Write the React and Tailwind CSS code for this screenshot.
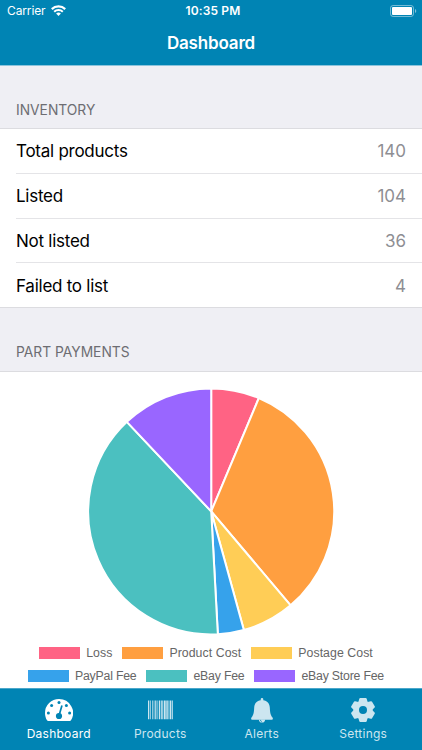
import React from 'react';

const inventory = [
  { label: 'Total products', value: 140 },
  { label: 'Listed', value: 104 },
  { label: 'Not listed', value: 36 },
  { label: 'Failed to list', value: 4 },
];

// start and end are degrees, clockwise from the top
const slices = [
  { label: 'Loss', color: '#ff6384', start: 0, end: 22.8 },
  { label: 'Product Cost', color: '#ff9f40', start: 22.8, end: 139.8 },
  { label: 'Postage Cost', color: '#ffcd56', start: 139.8, end: 164.6 },
  { label: 'PayPal Fee', color: '#36a2eb', start: 164.6, end: 176.9 },
  { label: 'eBay Fee', color: '#4bc0c0', start: 176.9, end: 316.7 },
  { label: 'eBay Store Fee', color: '#9966ff', start: 316.7, end: 360 },
];

const slicePath = ({ start, end }) => {
  const r = 123;
  const point = (deg) => {
    const a = (deg * Math.PI) / 180;
    return `${(r * Math.sin(a)).toFixed(2)} ${(-r * Math.cos(a)).toFixed(2)}`;
  };
  return `M0 0L${point(start)}A${r} ${r} 0 ${end - start > 180 ? 1 : 0} 1 ${point(end)}Z`;
};

function WifiIcon() {
  return (
    <svg className="ml-[5px] h-[11px] w-[15px]" viewBox="0 0 15 11" fill="none" stroke="white">
      <path d="M.8 4.100a9.500 9.500 0 0 1 13.400 0" strokeWidth="2.200" />
      <path d="M3.200 6.700a6.100 6.100 0 0 1 8.600 0" strokeWidth="2" />
      <path d="M7.500 11 5.100 8.600a3.400 3.400 0 0 1 4.800 0Z" fill="white" stroke="none" />
    </svg>
  );
}

function BatteryIcon() {
  return (
    <svg className="h-[12px] w-[27px]" viewBox="0 0 27 12">
      <rect x="0.5" y="0.5" width="23" height="11" rx="2.6" fill="none" stroke="white" strokeOpacity="0.45" />
      <rect x="2" y="2" width="20" height="8" rx="1" fill="white" />
      <path d="M25 4a2.2 2.2 0 0 1 0 4Z" fill="white" fillOpacity="0.5" />
    </svg>
  );
}

function GaugeIcon() {
  return (
    <svg className="h-[24px] w-[28px]" viewBox="0 0 28 24">
      <path d="M14 1A14 14 0 0 0 0 15c0 2.700.7 5.200 2 7.300.3.500.7.700 1.200.7h21.600c.5 0 .9-.2 1.200-.7A14 14 0 0 0 14 1Z" fill="white" />
      <g fill="#0084b4">
        <circle cx="3.400" cy="15" r="1.500" />
        <circle cx="6.600" cy="7.500" r="1.500" />
        <circle cx="14" cy="4.400" r="1.500" />
        <circle cx="21.400" cy="7.500" r="1.500" />
        <circle cx="24.600" cy="15" r="1.500" />
        <circle cx="14" cy="18" r="3.100" />
      </g>
      <path d="M14.200 17 16.800 8" stroke="#0084b4" strokeWidth="1.700" strokeLinecap="round" />
    </svg>
  );
}

function BarcodeIcon() {
  return (
    <svg className="h-[24px] w-[25px]" viewBox="0 0 25 24" fill="currentColor">
      <path d="M0 2.600h1.300v18.600H0zM2 2.600h.7v18.600H2zM4.200 2.600h.7v18.600h-.7zM5.700 2.600h.7v18.600h-.7zM7.200 2.600h1.200v18.600H7.200zM9.500 2.600h.7v18.600h-.7zM11 2.600h1.300v18.600H11zM13.200 2.600h1.500v18.600h-1.500zM15.700 2.600h2v18.600h-2zM18.300 2.600h1.500v18.600h-1.500zM20.500 2.600h.7v18.600h-.7zM21.800 2.600h1.200v18.600h-1.200zM23.600 2.600h1.200v18.600h-1.200z" />
    </svg>
  );
}

function BellIcon() {
  return (
    <svg className="h-[25px] w-[22px]" viewBox="0 0 22 25">
      <path
        d="M11 0c.8 0 1.300.6 1.300 1.400v.8c3.800.6 6.300 3.300 6.500 7.200.2 5.300.9 8 2.700 10 .7.900.4 2.400-.9 2.400H1.400C.1 21.800-.2 20.300.5 19.400c1.800-2 2.500-4.700 2.700-10 .2-3.900 2.700-6.600 6.500-7.200v-.8C9.700.6 10.200 0 11 0Z"
        fill="currentColor"
      />
      <path d="M7.900 21.500h6.200a3.100 3.100 0 0 1-6.200 0Z" fill="currentColor" />
      <path d="M9.200 21.800a1.900 1.900 0 0 0 1.800 1.700" stroke="#0084b4" strokeWidth=".7" fill="none" />
    </svg>
  );
}

function GearIcon() {
  return (
    <svg className="mr-px h-[24px] w-[24px]" viewBox="-12 -12 24 24">
      <g fill="currentColor">
        <circle r="9.600" />
        <path id="tooth" d="M-2.700-12h5.400q.8 0 1 .8L4.600-8h-9.200l.9-3.200q.2-.8 1-.8Z" />
        <use href="#tooth" transform="rotate(60)" />
        <use href="#tooth" transform="rotate(120)" />
        <use href="#tooth" transform="rotate(180)" />
        <use href="#tooth" transform="rotate(240)" />
        <use href="#tooth" transform="rotate(300)" />
      </g>
      <circle r="4" fill="#0084b4" />
    </svg>
  );
}

const tabs = [
  { label: 'Dashboard', icon: <GaugeIcon />, active: true },
  { label: 'Products', icon: <BarcodeIcon /> },
  { label: 'Alerts', icon: <BellIcon /> },
  { label: 'Settings', icon: <GearIcon /> },
];

function Legend({ items, className }) {
  return (
    <div className={`flex h-[22.5px] items-center justify-center gap-[10px] pr-[10px] ${className}`}>
      {items.map((item) => (
        <div key={item.label} className="flex items-center gap-[6px]">
          <span className="h-[12px] w-[41px]" style={{ backgroundColor: item.color }} />
          <span className="whitespace-nowrap font-['Liberation_Sans',sans-serif] text-[12.3px] leading-none text-[#666666]">
            {item.label}
          </span>
        </div>
      ))}
    </div>
  );
}

function App() {
  return (
    <div className="flex h-[750px] w-[422px] flex-col overflow-hidden bg-[#efeff4] font-['Inter',sans-serif]">
      <header className="h-[66px] shrink-0 border-b border-[#8cc4dc] bg-[#0084b4] text-white">
        <div className="grid h-[21px] grid-cols-3 items-center pl-[7px] pr-[5px] text-[12px]">
          <div className="flex items-center">
            <span className="tracking-[-0.01em]">Carrier</span>
            <WifiIcon />
          </div>
          <div className="pl-[2px] text-center font-semibold tracking-[0.01em]">10:35 PM</div>
          <div className="flex justify-end">
            <BatteryIcon />
          </div>
        </div>
        <h1 className="text-center text-[17px] font-semibold leading-[44px] tracking-[-0.01em]">Dashboard</h1>
      </header>

      <h2 className="h-[62px] shrink-0 px-4 pt-[33px] text-[13.8px] leading-[22px] text-[#6d6d72]">INVENTORY</h2>
      <ul className="shrink-0 border-y border-[#dcdce0] bg-white pl-4">
        {inventory.map((row) => (
          <li
            key={row.label}
            className="flex h-[44.75px] items-center justify-between border-b border-[#e4e4e7] pr-4 pt-[2px] text-[17px] tracking-[-0.015em] text-black last:h-[44px] last:border-b-0"
          >
            <span>{row.label}</span>
            <span className="tracking-normal text-[#8e8e93]">{row.value}</span>
          </li>
        ))}
      </ul>

      <h2 className="h-[63px] shrink-0 px-4 pt-[33px] text-[13.8px] leading-[22px] text-[#6d6d72]">PART PAYMENTS</h2>
      <section className="flex-1 border-t border-[#dcdce0] bg-white pt-[14px]">
        <svg className="mx-auto block h-[250px] w-[250px]" viewBox="-125.2 -125.4 250 250">
          {slices.map((s) => (
            <path key={s.label} d={slicePath(s)} fill={s.color} stroke="white" strokeWidth="2" strokeLinejoin="bevel" />
          ))}
        </svg>
        <div className="mt-[6px]">
          <Legend items={slices.slice(0, 3)} className="tracking-[0.004em]" />
          <Legend items={slices.slice(3)} className="tracking-[-0.013em]" />
        </div>
      </section>

      <nav className="grid h-[62px] shrink-0 grid-cols-4 border-t border-[#4ba7ca] bg-[#0084b4] px-2">
        {tabs.map((tab) => (
          <div
            key={tab.label}
            className={`flex flex-col items-center pt-[7px] ${tab.active ? 'text-white' : 'text-[#cce6f0]'}`}
          >
            <div className="flex h-[28px] items-center">{tab.icon}</div>
            <span className="text-[12px] leading-[20px] tracking-[0.02em]">{tab.label}</span>
          </div>
        ))}
      </nav>
    </div>
  );
}

export default App;
